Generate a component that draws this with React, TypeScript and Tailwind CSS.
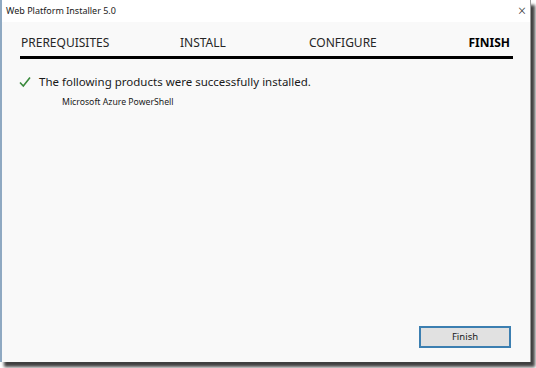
export default function App() {
  return (
    <div className="w-[536px] h-[368px] bg-white" style={{ fontFamily: '"Noto Sans", "Open Sans", sans-serif' }}>
      <div className="w-[531px] h-[362px] flex flex-col border-l-2 border-[#8fa9c2] border-r border-r-[#9a9a9a] shadow-[4px_5px_3px_rgba(0,0,0,0.75)]">
        {/* Title bar */}
        <div className="h-[22px] shrink-0 flex items-center justify-between bg-white pl-[4px] pr-[4px]">
          <span className="text-[9px] text-[#1a1a1a]">Web Platform Installer 5.0</span>
          <span className="text-[14px] leading-none text-[#333] font-light">×</span>
        </div>

        {/* Body */}
        <div className="flex-1 flex flex-col bg-[#f9f9f9] pl-[18px] pr-[17px]">
          <div className="flex items-end h-[27px] pl-[1px] pr-[3px] text-[12px] text-[#262626] leading-none">
            <span className="w-[159px]">PREREQUISITES</span>
            <span className="w-[129px]">INSTALL</span>
            <span className="flex-1">CONFIGURE</span>
            <span className="font-bold text-black">FINISH</span>
          </div>
          <div className="h-[3px] bg-black mt-[7px]" />

          <div className="flex items-center gap-[8px] mt-[17px] -ml-[1px]">
            <svg width="12" height="12" viewBox="0 0 12 12" className="shrink-0">
              <path d="M1 6.5 L4.3 10 L11 1.5" fill="none" stroke="#3a8a3c" strokeWidth="1.6" />
            </svg>
            <span className="text-[11.5px] text-[#1a1a1a] leading-none">The following products were successfully installed.</span>
          </div>
          <div className="text-[8.7px] text-[#1a1a1a] mt-[10px] pl-[42px] leading-none">Microsoft Azure PowerShell</div>

          <div className="flex-1" />
          <div className="flex justify-end mb-[14px] pr-[2px]">
            <button className="w-[92px] h-[22px] bg-[#e1e1e1] border-2 border-[#3c7fb1] text-[9.5px] text-[#1a1a1a] leading-none">
              Finish
            </button>
          </div>
        </div>
      </div>
    </div>
  );
}
